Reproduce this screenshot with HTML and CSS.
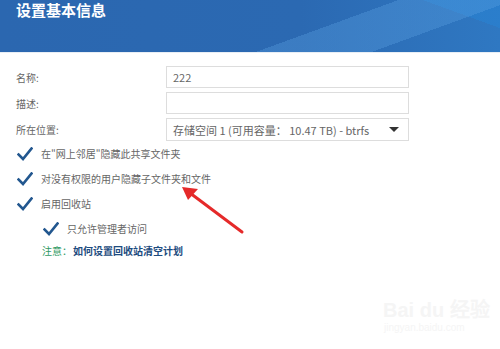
FILE: index.html
```html
<!DOCTYPE html>
<html lang="zh-CN">
<head>
  <meta charset="UTF-8" />
  <title>设置基本信息</title>
  <link rel="stylesheet" href="styles.css">
</head>
<body>
  <div class="dialog">
    <!-- Header -->
    <div class="header">
      <div class="title">设置基本信息</div>
    </div>

    <!-- Form -->
    <div class="form">
      <div class="row">
        <div class="label">名称:</div>
        <div class="field">222</div>
      </div>
      <div class="row">
        <div class="label">描述:</div>
        <div class="field"></div>
      </div>
      <div class="row">
        <div class="label">所在位置:</div>
        <div class="field select">
          <span>存储空间 1 (可用容量： 10.47 TB) - btrfs</span>
          <span class="caret"></span>
        </div>
      </div>

      <div class="checks">
        <div class="check"><svg class="tick" viewBox="0 0 16 14"><path d="M1.5 7.5 L6 12 L14.5 1.5" /></svg>在&quot;网上邻居&quot;隐藏此共享文件夹</div>
        <div class="check"><svg class="tick" viewBox="0 0 16 14"><path d="M1.5 7.5 L6 12 L14.5 1.5" /></svg>对没有权限的用户隐藏子文件夹和文件</div>
        <div class="check"><svg class="tick" viewBox="0 0 16 14"><path d="M1.5 7.5 L6 12 L14.5 1.5" /></svg>启用回收站</div>
        <div class="check sub"><svg class="tick" viewBox="0 0 16 14"><path d="M1.5 7.5 L6 12 L14.5 1.5" /></svg>只允许管理者访问</div>
        <div class="note"><span class="note-key">注意：</span><span class="note-link">如何设置回收站清空计划</span></div>
      </div>
    </div>

    <!-- Red arrow annotation -->
    <svg class="arrow" viewBox="0 0 500 349">
      <line x1="242" y1="232" x2="190" y2="193" />
      <polygon points="182,187 198,189 188,200" />
    </svg>

    <!-- Watermark -->
    <div class="watermark">
      <div class="wm-top">Bai du 经验</div>
      <div class="wm-bottom">jingyan.baidu.com</div>
    </div>
  </div>
</body>
</html>
```

FILE: styles.css
```css
*{margin:0;padding:0;box-sizing:border-box;}
html,body{width:500px;height:349px;overflow:hidden;background:#fff;
  font-family:"Noto Sans CJK SC","Noto Sans",sans-serif;}

.dialog{position:relative;width:500px;height:349px;}

.header{height:53px;
  background:
    linear-gradient(160deg, transparent 0 62%, rgba(90,160,225,0.35) 62% 80%, transparent 80%),
    linear-gradient(200deg, rgba(40,130,210,0.6) 0 12%, transparent 12%),
    linear-gradient(90deg,#2b67b0 0%,#2b69b2 60%,#2f78c2 100%);
  border-bottom:1px solid #e8eef5;
  padding:0 16px;}
.title{color:#fff;font-size:15px;font-weight:bold;line-height:18px;padding-top:1px;}

.form{padding:13px 16px 0 16px;}

.row{display:flex;align-items:center;margin-bottom:4px;}
.label{width:150px;font-size:10px;color:#666;}
.field{width:243px;height:22px;border:1px solid #ddd;background:#fff;
  font-size:11px;color:#666;padding:0 6px;line-height:20px;}
.select{display:flex;justify-content:space-between;align-items:center;height:23px;}
.caret{width:0;height:0;border-left:5px solid transparent;border-right:5px solid transparent;
  border-top:5px solid #333;margin-right:3px;}

.checks{margin-top:-4px;}
.check{display:flex;align-items:center;height:25px;font-size:10px;color:#666;}
.check.sub{padding-left:26px;}
.tick{width:16px;height:14px;margin-right:8px;margin-left:1px;}
.tick path{fill:none;stroke:#22578f;stroke-width:2.6;stroke-linecap:square;}

.note{font-size:10px;height:22px;line-height:20px;padding-left:26px;}
.note-key{color:#2f9a63;margin-right:1px;}
.note-link{color:#1d4c80;font-weight:bold;}

.arrow{position:absolute;left:0;top:0;width:500px;height:349px;pointer-events:none;}
.arrow line{stroke:#e52a2a;stroke-width:3;stroke-linecap:round;}
.arrow polygon{fill:#e52a2a;}

.watermark{position:absolute;left:383px;top:298px;color:#f5f5f5;font-family:"Liberation Sans",sans-serif;}
.wm-top{font-size:20px;font-weight:bold;line-height:24px;}
.wm-bottom{font-size:10px;line-height:12px;padding-left:1px;}
```
